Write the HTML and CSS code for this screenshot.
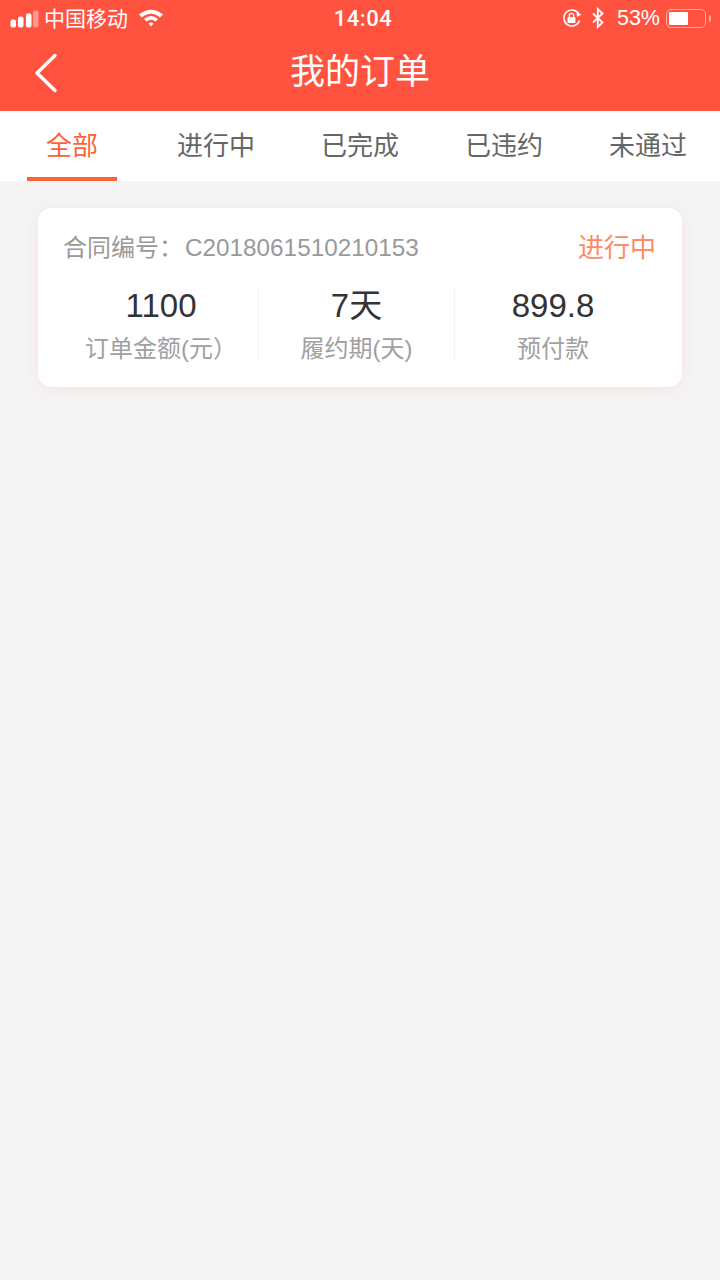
FILE: index.html
```
<!DOCTYPE html>
<html lang="zh">
<head>
<meta charset="utf-8">
<title>我的订单</title>
<link rel="stylesheet" href="styles.css">
</head>
<body>
<header class="header">
  <div class="status">
    <div class="status-left">
      <svg class="signal" width="29" height="18" viewBox="0 0 29 18"><rect x="0.500" y="9.500" width="5.500" height="8" rx="2" fill="#fff"/><rect x="8" y="6.500" width="5.500" height="11" rx="2" fill="#fff"/><rect x="16" y="3.500" width="5.500" height="14" rx="2" fill="#fff"/><rect x="23" y="0.500" width="5.500" height="17" rx="2" fill="#fff" fill-opacity=".4"/></svg>
      <span class="carrier">中国移动</span>
      <svg class="wifi" width="24" height="19" viewBox="0 0 24 19"><path d="M0 6.500Q12 -3 24 6.500L21 9.500Q12 2 3 9.500Z" fill="#fff"/><path d="M5 11Q12 5 19 11L16.500 13.500Q12 10 7.500 13.500Z" fill="#fff"/><path d="M9.500 15.500Q12 13.500 14.500 15.500L12 18.500Z" fill="#fff"/></svg>
    </div>
    <span class="time">14:04</span>
    <div class="status-right">
      <svg class="lock" width="20" height="20" viewBox="0 0 20 20"><path d="M17.500 12.500A8 8 0 1 1 16.500 5.500" fill="none" stroke="#fff" stroke-width="1.600"/><path d="M19.500 6.500L15 9L14.500 4Z" fill="#fff"/><rect x="5.500" y="9" width="8" height="6" rx="1" fill="#fff"/><path d="M7.300 9V7.500a2.200 2.200 0 0 1 4.400 0V9" fill="none" stroke="#fff" stroke-width="1.300"/></svg>
      <svg class="bt" width="14" height="22" viewBox="0 0 14 22"><path d="M2 6.500L11.500 15.500L6.800 20V2L11.500 6.500L2 15.500" fill="none" stroke="#fff" stroke-width="1.800"/></svg>
      <span class="pct">53%</span>
      <div class="battery"><div class="battery-fill"></div></div>
      <div class="battery-cap"></div>
    </div>
  </div>
  <div class="navbar">
    <svg class="back" width="24" height="40" viewBox="0 0 24 40"><path d="M21 2.500L3 20L21 37.500" fill="none" stroke="#fff" stroke-width="3.400" stroke-linecap="round" stroke-linejoin="round"/></svg>
    <h1 class="title">我的订单</h1>
  </div>
</header>
<nav class="tabs">
  <div class="tab tab-active">全部</div>
  <div class="tab">进行中</div>
  <div class="tab">已完成</div>
  <div class="tab">已违约</div>
  <div class="tab">未通过</div>
</nav>
<main class="content">
  <section class="card">
    <div class="card-top">
      <span class="contract">合同编号：<span class="contract-no">C2018061510210153</span></span>
      <span class="state">进行中</span>
    </div>
    <div class="stats">
      <div class="stat stat-1"><div class="value">1100</div><div class="label">订单金额(元）</div></div>
      <div class="stat stat-2"><div class="value">7天</div><div class="label">履约期(天)</div></div>
      <div class="stat stat-3"><div class="value">899.8</div><div class="label">预付款</div></div>
    </div>
  </section>
</main>
</body>
</html>
```
FILE: styles.css
```
* { box-sizing: border-box; }
html, body { margin: 0; padding: 0; }
body {
  width: 720px;
  height: 1280px;
  overflow: hidden;
  background: #f4f4f4;
  font-family: "Liberation Sans", "Noto Sans CJK SC", sans-serif;
}
.header { background: #ff5340; height: 111px; color: #fff; }
.status {
  height: 37px;
  display: flex;
  align-items: center;
  justify-content: space-between;
  padding: 0 9px 0 10px;
  position: relative;
}
.status-left, .status-right { display: flex; align-items: center; }
.carrier { font-size: 21px; margin-left: 5px; margin-top: -3px; color: #fff; }
.wifi { margin-left: 11px; margin-top: -2px; }
.time {
  position: absolute;
  left: 0; right: 0; top: 6px;
  text-align: center;
  font-size: 22px;
  line-height: 25px;
  padding-left: 6px;
  font-family: Roboto, "Liberation Sans", sans-serif;
  font-weight: 500;
  letter-spacing: .5px;
}
.lock { margin-right: 9px; margin-top: -1px; }
.bt { margin-right: 12px; margin-top: -1px; }
.pct { font-size: 21.500px; margin-right: 6px; margin-top: -1px; }
.battery {
  width: 40px; height: 19px;
  border: 1.500px solid rgba(255,255,255,.5);
  border-radius: 5px;
  padding: 2px;
  margin-top: -1px;
}
.battery-fill { width: 19px; height: 100%; background: #fff; border-radius: 1px; }
.battery-cap { width: 2px; height: 7px; margin-left: 3px; margin-top: -1px; background: rgba(255,255,255,.5); border-radius: 0 2px 2px 0; }
.navbar {
  height: 74px;
  display: flex;
  align-items: center;
  justify-content: center;
  position: relative;
  padding-bottom: 4px;
}
.back { position: absolute; left: 34px; top: 16px; }
.title { margin: 0; font-size: 35px; font-weight: 400; line-height: 44px; color: #fff; }
.tabs { display: flex; height: 70px; background: #fff; }
.tab {
  flex: 0 0 144px;
  display: flex;
  align-items: center;
  justify-content: center;
  font-size: 26px;
  color: #666;
  padding-bottom: 5px;
}
.tab-active { color: #ff6136; position: relative; }
.tab-active::after {
  content: "";
  position: absolute;
  left: 27px;
  width: 90px;
  bottom: 0;
  height: 4px;
  background: #ff6136;
}
.content { padding: 27px 38px 0 38px; }
.card {
  height: 179px;
  background: #fff;
  border-radius: 14px;
  box-shadow: 0 2px 14px rgba(255,97,54,.10);
  padding: 18px 26px 0 25px;
}
.card-top { display: flex; justify-content: space-between; align-items: center; height: 38px; }
.contract { font-size: 24px; color: #999; }
.contract-no { font-size: 24.300px; margin-left: 2px; }
.state { font-size: 26px; color: #ff8a65; }
.stats { display: flex; margin: 24px -26px 0 -25px; height: 72px; }
.stat { text-align: center; }
.stat-1 { width: 221px; padding-left: 26px; border-right: 1px solid #f2f2f2; }
.stat-2 { width: 196px; padding-left: 2px; padding-right: 2px; border-right: 1px solid #f2f2f2; }
.stat-3 { flex: 1; padding-right: 31px; }
.value { font-size: 33px; line-height: 36px; color: #333; }
.label { font-size: 24px; line-height: 34px; color: #a0a0a0; margin-top: 8px; white-space: nowrap; }
```
